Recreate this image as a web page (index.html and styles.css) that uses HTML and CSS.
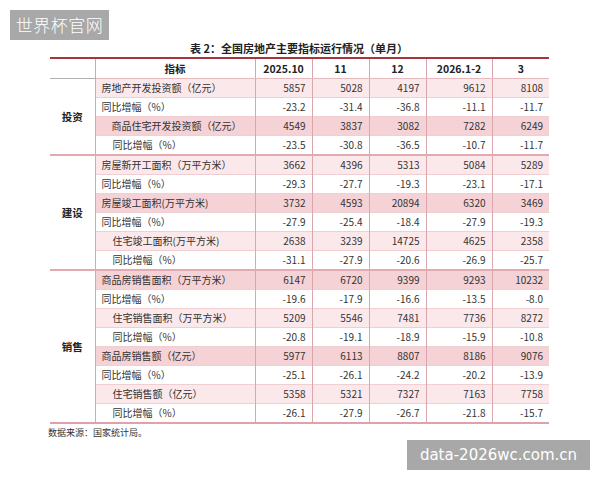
FILE: index.html
```html
<!DOCTYPE html>
<html lang="zh">
<head>
<meta charset="utf-8">
<link rel="stylesheet" href="styles.css">
</head>
<body>
<div class="page">
  <div class="title">表 2：全国房地产主要指标运行情况（单月）</div>
  <table class="data">
    <colgroup>
      <col class="c-group"><col class="c-label"><col class="c-n"><col class="c-n"><col class="c-n"><col class="c-w"><col class="c-n">
    </colgroup>
    <thead>
      <tr><th></th><th>指标</th><th>2025.10</th><th>11</th><th>12</th><th>2026.1-2</th><th>3</th></tr>
    </thead>
    <tbody class="grp">
      <tr class="pink"><td class="g" rowspan="4">投资</td><td class="l">房地产开发投资额（亿元）</td><td>5857</td><td>5028</td><td>4197</td><td>9612</td><td>8108</td></tr>
      <tr><td class="l">同比增幅（%）</td><td>-23.2</td><td>-31.4</td><td>-36.8</td><td>-11.1</td><td>-11.7</td></tr>
      <tr class="dark"><td class="l i">商品住宅开发投资额（亿元）</td><td>4549</td><td>3837</td><td>3082</td><td>7282</td><td>6249</td></tr>
      <tr><td class="l i2">同比增幅（%）</td><td>-23.5</td><td>-30.8</td><td>-36.5</td><td>-10.7</td><td>-11.7</td></tr>
    </tbody>
    <tbody class="grp">
      <tr class="pink"><td class="g" rowspan="6">建设</td><td class="l">房屋新开工面积（万平方米）</td><td>3662</td><td>4396</td><td>5313</td><td>5084</td><td>5289</td></tr>
      <tr><td class="l">同比增幅（%）</td><td>-29.3</td><td>-27.7</td><td>-19.3</td><td>-23.1</td><td>-17.1</td></tr>
      <tr class="dark"><td class="l">房屋竣工面积(万平方米)</td><td>3732</td><td>4593</td><td>20894</td><td>6320</td><td>3469</td></tr>
      <tr><td class="l">同比增幅（%）</td><td>-27.9</td><td>-25.4</td><td>-18.4</td><td>-27.9</td><td>-19.3</td></tr>
      <tr class="pink"><td class="l i2">住宅竣工面积(万平方米)</td><td>2638</td><td>3239</td><td>14725</td><td>4625</td><td>2358</td></tr>
      <tr><td class="l i2">同比增幅（%）</td><td>-31.1</td><td>-27.9</td><td>-20.6</td><td>-26.9</td><td>-25.7</td></tr>
    </tbody>
    <tbody class="grp last">
      <tr class="dark"><td class="g" rowspan="8">销售</td><td class="l">商品房销售面积（万平方米）</td><td>6147</td><td>6720</td><td>9399</td><td>9293</td><td>10232</td></tr>
      <tr><td class="l">同比增幅（%）</td><td>-19.6</td><td>-17.9</td><td>-16.6</td><td>-13.5</td><td>-8.0</td></tr>
      <tr class="pink"><td class="l i2">住宅销售面积（万平方米）</td><td>5209</td><td>5546</td><td>7481</td><td>7736</td><td>8272</td></tr>
      <tr><td class="l i2">同比增幅（%）</td><td>-20.8</td><td>-19.1</td><td>-18.9</td><td>-15.9</td><td>-10.8</td></tr>
      <tr class="dark"><td class="l">商品房销售额（亿元）</td><td>5977</td><td>6113</td><td>8807</td><td>8186</td><td>9076</td></tr>
      <tr><td class="l">同比增幅（%）</td><td>-25.1</td><td>-26.1</td><td>-24.2</td><td>-20.2</td><td>-13.9</td></tr>
      <tr class="pink"><td class="l i2">住宅销售额（亿元）</td><td>5358</td><td>5321</td><td>7327</td><td>7163</td><td>7758</td></tr>
      <tr><td class="l i2">同比增幅（%）</td><td>-26.1</td><td>-27.9</td><td>-26.7</td><td>-21.8</td><td>-15.7</td></tr>
    </tbody>
  </table>
  <div class="source">数据来源：国家统计局。</div>
</div>
<div class="wm wm-tl">世界杯官网</div>
<div class="wm wm-br">data-2026wc.com.cn</div>
</body>
</html>
```
FILE: styles.css
```css
html, body {
  margin: 0;
  padding: 0;
  background: #fff;
}
body {
  width: 600px;
  height: 480px;
  overflow: hidden;
  position: relative;
  font-family: "Noto Sans CJK SC", "Noto Sans", sans-serif;
  color: #333;
}
.page {
  padding: 40px 0 0 50px;
}
.title {
  width: 498px;
  text-align: center;
  font-size: 11px;
  line-height: 17px;
  font-weight: bold;
  color: #222;
}
.data {
  width: 498px;
  table-layout: fixed;
  border-collapse: collapse;
  font-size: 10px;
  border-top: 2px solid #a8343f;
  border-bottom: 2px solid #e0a2aa;
}
.c-group { width: 45px; }
.c-label { width: 160px; }
.c-n { width: 57px; }
.c-w { width: 66px; }
.data th {
  height: 19px;
  padding: 0;
  font-size: 10.5px;
  font-weight: bold;
  color: #222;
  text-align: center;
  border-bottom: 1px solid #e6b9bf;
  border-left: 1px solid #d9a5ac;
}
.data th:first-child {
  border-left: none;
  border-bottom-color: #b0b0b0;
}
.data td {
  height: 18px;
  padding: 0 6px 0 0;
  line-height: 18px;
  text-align: right;
  white-space: nowrap;
  border-left: 1px solid #dba7ae;
  border-top: 1px solid #f0cfd3;
}
.data td.g {
  border-left: none;
  text-align: center;
  padding: 0;
  font-size: 10.5px;
  font-weight: bold;
  color: #222;
  background: #fff;
}
.data td.l {
  text-align: left;
  padding-left: 6px;
}
.data td.i { padding-left: 16px; }
.data td.i2 { padding-left: 17px; }
.grp + .grp tr:first-child td {
  border-top: 2px solid #e2a9b0;
}
.pink td { background: #fbe8ea; }
.dark td { background: #f4d2d6; }
.source {
  margin-top: 2px;
  margin-left: -2px;
  font-size: 9px;
  line-height: 14px;
  color: #333;
}
.wm {
  position: absolute;
  background: #a8a8a8;
  color: #fff;
  font-family: "Noto Sans CJK SC", "Noto Sans", sans-serif;
  white-space: nowrap;
}
.wm-tl {
  left: 10px;
  top: 10px;
  width: 99px;
  height: 30px;
  line-height: 30px;
  font-size: 17px;
  font-weight: 300;
  text-align: center;
  letter-spacing: 0.5px;
}
.wm-br {
  left: 407px;
  top: 440px;
  width: 183px;
  height: 30px;
  line-height: 30px;
  text-align: center;
  font-family: "DejaVu Sans", sans-serif;
  font-size: 15px;
}
```
